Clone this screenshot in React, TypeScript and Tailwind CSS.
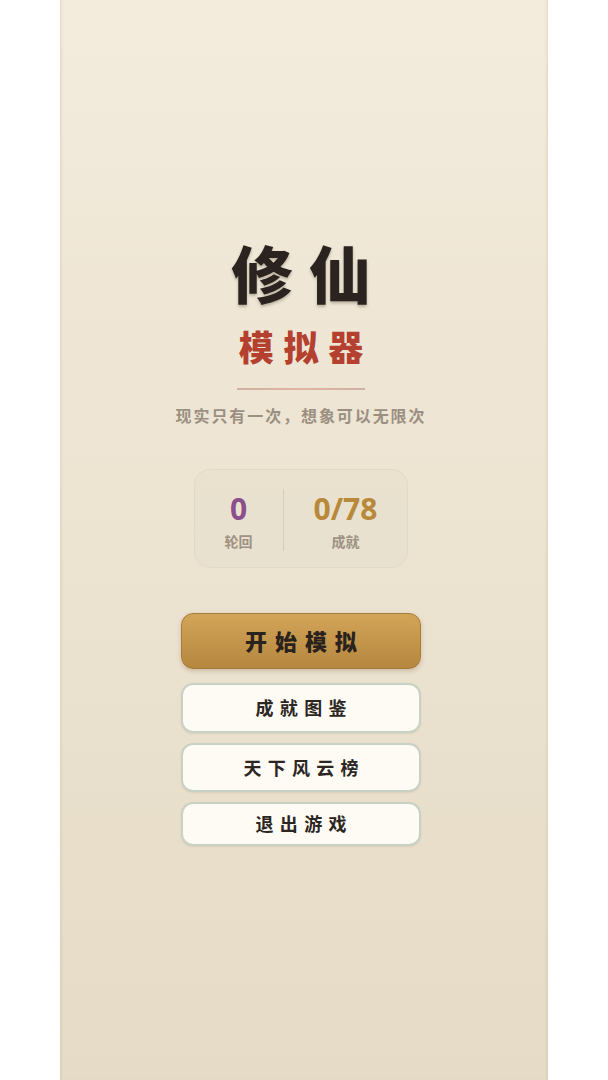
import React from 'react';

const font = { fontFamily: '"Noto Sans CJK SC", "Noto Sans", sans-serif' };
const num = { fontFamily: '"Open Sans", "Noto Sans", sans-serif' };

const MenuButton: React.FC<{ label: string; h: string }> = ({ label, h }) => (
  <button
    className={`w-full ${h} whitespace-nowrap rounded-xl border-2 border-[#c7d2c5] bg-[#fdfbf4] pl-[0.35em] text-[18px] font-bold tracking-[0.35em] text-[#2c2622] shadow-[0_1px_2px_rgba(120,100,70,0.12)]`}
  >
    {label}
  </button>
);

const App: React.FC = () => {
  return (
    <div className="min-h-screen bg-white flex justify-center" style={font}>
      <div className="w-[488px] min-h-screen bg-gradient-to-b from-[#f3ebdc] to-[#e5dbc6] shadow-[inset_3px_0_3px_-2px_rgba(150,130,100,0.18),inset_-3px_0_3px_-2px_rgba(150,130,100,0.18)] flex flex-col items-center pt-[241px] pr-[6px]">
        <h1 className="whitespace-nowrap pl-[0.26em] text-[62px] leading-none font-black tracking-[0.26em] text-[#2a231f] [text-shadow:0_2px_3px_rgba(60,40,20,0.3)]">
          修仙
        </h1>
        <h2 className="mt-[25px] whitespace-nowrap pl-[0.28em] text-[35px] leading-none font-black tracking-[0.28em] text-[#b4402f]">
          模拟器
        </h2>
        <div className="mt-[25px] h-[1.5px] w-[128px] bg-gradient-to-r from-[#cdb3a4] via-[#e2b2a2] to-[#cdb3a4]" />
        <p className="mt-[17px] whitespace-nowrap text-[16px] leading-none font-bold tracking-[0.12em] text-[#9b8f81]">
          现实只有一次，想象可以无限次
        </p>

        <div className="mt-[46px] flex items-stretch rounded-2xl border border-[#e2d9c7] bg-[#e9e0ce]/80 pt-[19px] pb-[16px]">
          <div className="flex flex-col items-center px-[30px]">
            <span className="text-[30px] leading-[40px] font-bold text-[#8b4f8c]" style={num}>0</span>
            <span className="mt-[2px] text-[14px] leading-[20px] font-bold text-[#9d9283]">轮回</span>
          </div>
          <div className="w-px bg-[#d6ccb9]" />
          <div className="flex flex-col items-center px-[30px]">
            <span className="text-[30px] leading-[40px] font-bold text-[#b8893a]" style={num}>0/78</span>
            <span className="mt-[2px] text-[14px] leading-[20px] font-bold text-[#9d9283]">成就</span>
          </div>
        </div>

        <div className="mt-[45px] w-[240px] flex flex-col gap-[10px]">
          <button className="w-full h-[56px] mb-[4px] whitespace-nowrap rounded-xl border border-[#a77b3c] bg-gradient-to-b from-[#d2a558] to-[#b6873f] pl-[0.36em] text-[22px] font-black tracking-[0.36em] text-[#2a221c] shadow-[0_2px_4px_rgba(120,80,30,0.25)]">
            开始模拟
          </button>
          <MenuButton label="成就图鉴" h="h-[50px]" />
          <MenuButton label="天下风云榜" h="h-[49px]" />
          <MenuButton label="退出游戏" h="h-[44px]" />
        </div>
      </div>
    </div>
  );
};

export default App;
